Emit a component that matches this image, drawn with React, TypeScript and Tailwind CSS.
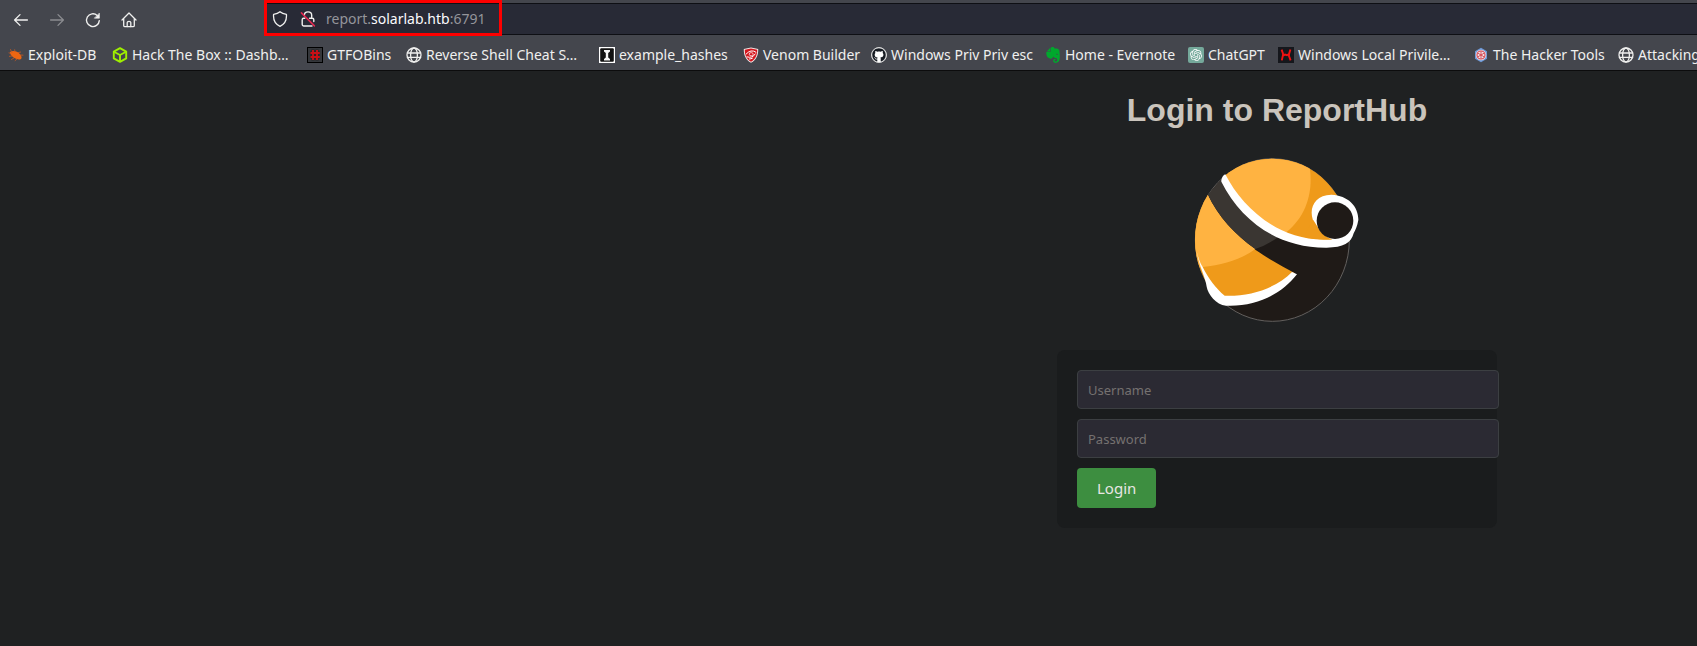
import React from "react";
import { SiHackthebox, SiEvernote, SiOpenai } from "react-icons/si";
import { FaGithub } from "react-icons/fa";

const line = {
  fill: "none",
  stroke: "currentColor",
  strokeLinecap: "round" as const,
  strokeLinejoin: "round" as const,
};

function BackIcon() {
  return (
    <svg viewBox="0 0 16 16" className="size-4" strokeWidth="1.3" {...line}>
      <path d="M14.4 8H1.8M7 2.6L1.6 8L7 13.4" />
    </svg>
  );
}

function ForwardIcon() {
  return (
    <svg viewBox="0 0 16 16" className="size-4" strokeWidth="1.3" {...line}>
      <path d="M1.6 8H14.2M9 2.6L14.4 8L9 13.4" />
    </svg>
  );
}

function ReloadIcon() {
  return (
    <svg viewBox="0 0 16 16" className="size-4" strokeWidth="1.4" {...line}>
      <path d="M14.3 8.6A6.4 6.4 0 1 1 12.2 3.4" />
      <path d="M14.4 1.4V6.2H9.6Z" fill="currentColor" strokeWidth="0.6" />
    </svg>
  );
}

function HomeIcon() {
  return (
    <svg viewBox="0 0 16 16" className="size-4" strokeWidth="1.3" {...line}>
      <path d="M1 8L8 1L15 8M2.7 6.6V13.4Q2.7 14.7 4 14.7H12Q13.3 14.7 13.3 13.4V6.6" />
      <path d="M6.2 14.5V10.6Q6.2 9.4 8 9.4Q9.8 9.4 9.8 10.6V14.5" />
    </svg>
  );
}

function ShieldIcon() {
  return (
    <svg viewBox="0 0 16 16" className="size-4" strokeWidth="1.3" {...line}>
      <path d="M8 0.8C9.6 2.2 12 3 14.4 3.3C14.9 8.6 13 13 8 15.3C3 13 1.1 8.6 1.6 3.3C4 3 6.4 2.2 8 0.8Z" />
    </svg>
  );
}

function InsecureLockIcon() {
  return (
    <svg viewBox="0 0 16 16" className="size-4" strokeWidth="1.4" {...line}>
      <path d="M4.3 4.6Q4.3 0.9 8 0.9Q11.7 0.9 11.7 4.3V7M9.6 7.3H12.4Q13.8 7.3 13.8 8.7V10.6M12 15H3.6Q2.2 15 2.2 13.6V8.7Q2.2 7.3 3.6 7.3H4.8" />
      <path d="M1.4 1.9L14.4 14.9" stroke="#e22850" strokeWidth="1.5" />
    </svg>
  );
}

function ExploitIcon() {
  return (
    <svg viewBox="0 0 16 16" className="size-4" fill="#ee6611">
      <path d="M2 5C5 3.2 9.5 4.2 12 7.2C14 9.4 14 11.4 12.6 12.2C9.5 13 5.4 11.4 3.4 8.6C2.6 7.4 1.8 6.2 2 5Z" />
      <path
        d="M4 6L2.4 2.2M7 5L6.6 2.4M10 5.6L13 5M12 8L15.4 8.2M4 9L1 9.4M6 11L3.2 12.6M9 12L6.8 13.8M3 6.4L0.6 5.8"
        stroke="#c95a22"
        strokeWidth="0.8"
      />
    </svg>
  );
}

function GtfoIcon() {
  return (
    <svg viewBox="0 0 16 16" className="size-4">
      <rect x="0.5" y="0.5" width="15" height="15" fill="#35373b" stroke="#000" />
      <path d="M6 2.6V13.4M10 2.6V13.4M3 6H13M3 10H13" stroke="#222325" strokeWidth="3" />
      <path d="M6 3V13M10 3V13M3.4 6H12.8M3.4 10H12.8" stroke="#c81015" strokeWidth="1.9" />
    </svg>
  );
}

function GlobeIcon() {
  return (
    <svg viewBox="0 0 16 16" className="size-4" strokeWidth="1.3" {...line}>
      <circle cx="8" cy="8" r="7" />
      <ellipse cx="8" cy="8" rx="3.4" ry="7" />
      <path d="M1.4 6H14.6M1.4 10.3H14.6" />
    </svg>
  );
}

function HashesIcon() {
  return (
    <svg viewBox="0 0 16 16" className="size-4">
      <rect width="16" height="16" fill="#fff" />
      <rect x="1.2" y="1.2" width="13.6" height="13.6" rx="1" fill="#111" />
      <path d="M5 3H11V4.4L9.2 6V10.4L11 12V13.4H5V12L6.8 10.4V6L5 4.4Z" fill="#f4f4f4" />
    </svg>
  );
}

function VenomIcon() {
  return (
    <svg viewBox="0 0 16 16" className="size-4">
      <path d="M8 0.4L15.2 2C15.4 8 13.4 13 8 15.8C2.6 13 0.6 8 0.8 2Z" fill="#f3e9e9" />
      <path d="M8 1.4L14.2 2.8C14.3 8 12.5 12.2 8 14.7C3.5 12.2 1.7 8 1.8 2.8Z" fill="#d3161d" />
      <path d="M2.8 7.4Q8 1.6 13.2 5.4M3.6 9.8Q9.6 11.6 12.4 6.6M6 12Q8 12 9.8 11" stroke="#fff" strokeWidth="1" fill="none" />
      <ellipse cx="8.2" cy="7.2" rx="2" ry="1.6" fill="#d3161d" stroke="#fff" strokeWidth="0.7" />
    </svg>
  );
}

function GithubIcon() {
  return (
    <span className="grid size-4 place-items-center rounded-full border border-[#d9d9d9] bg-white text-[#161b22]">
      <FaGithub className="size-[14px]" />
    </span>
  );
}

function ChatGptIcon() {
  return (
    <span className="grid size-4 place-items-center rounded-[2px] bg-[#75a99b] text-white">
      <SiOpenai className="size-3" />
    </span>
  );
}

function PrivilegeIcon() {
  return (
    <svg viewBox="0 0 16 16" className="size-4">
      <rect width="16" height="16" fill="#15171c" />
      <path d="M3.6 2.6L5 6.6V8L3.8 13.4M12.4 2.4L11 7.2V9L12.6 13.4M5 8.6L7 7.6L9 8.2L11 7" stroke="#f01212" strokeWidth="1.9" fill="none" />
    </svg>
  );
}

function HackerToolsIcon() {
  return (
    <svg viewBox="0 0 16 16" className="size-4">
      <path d="M8 0.8L14 4.3V11.7L8 15.2L2 11.7V4.3Z" fill="#6f9ad8" />
      <circle cx="8" cy="8" r="5.2" fill="#f2e4e6" />
      <circle cx="8" cy="8" r="4" fill="none" stroke="#d2414c" strokeWidth="1.1" />
      <path d="M8 4.4V11.6M4.9 6.2L11.1 9.8M4.9 9.8L11.1 6.2" stroke="#d2414c" strokeWidth="0.9" />
    </svg>
  );
}

function HackTheBoxIcon() {
  return (
    <svg viewBox="0 0 16 16" className="size-4" fill="none" stroke="#9fef00" strokeWidth="1.9" strokeLinejoin="round">
      <path d="M8 1.2L14.2 4.6V11.4L8 14.8L1.8 11.4V4.6Z" />
      <path d="M2.4 5L8 8L13.6 5M8 8V14.4" />
    </svg>
  );
}

const bookmarks = [
  { label: "Exploit-DB", icon: <ExploitIcon />, width: "w-[104px]" },
  { label: "Hack The Box :: Dashb…", icon: <HackTheBoxIcon />, width: "w-[195px]" },
  { label: "GTFOBins", icon: <GtfoIcon />, width: "w-[99px]" },
  { label: "Reverse Shell Cheat S…", icon: <GlobeIcon />, width: "w-[193px]" },
  { label: "example_hashes", icon: <HashesIcon />, width: "w-[144px]" },
  { label: "Venom Builder", icon: <VenomIcon />, width: "w-[128px]" },
  { label: "Windows Priv Priv esc", icon: <GithubIcon />, width: "w-[174px]" },
  { label: "Home - Evernote", icon: <SiEvernote className="size-4 text-[#00a82d]" />, width: "w-[143px]" },
  { label: "ChatGPT", icon: <ChatGptIcon />, width: "w-[90px]" },
  { label: "Windows Local Privile…", icon: <PrivilegeIcon />, width: "w-[195px]" },
  { label: "The Hacker Tools", icon: <HackerToolsIcon />, width: "w-[145px]" },
  { label: "Attacking", icon: <GlobeIcon />, width: "w-[80px]" },
];

function Toolbar() {
  return (
    <div className="flex h-[39px] items-start pt-[3px] pl-[13px]">
      <nav aria-label="Navigation" className="flex h-[34px] w-[253px] shrink-0 items-center gap-5">
        <button type="button" aria-label="Back"><BackIcon /></button>
        <button type="button" aria-label="Forward" disabled className="text-[#8b8c90]"><ForwardIcon /></button>
        <button type="button" aria-label="Reload"><ReloadIcon /></button>
        <button type="button" aria-label="Home"><HomeIcon /></button>
      </nav>
      <div className="relative flex h-8 grow items-center border-y border-l border-[#0e0f14] bg-[#282a36] pl-[5px]">
        <button type="button" aria-label="Tracking protection"><ShieldIcon /></button>
        <button type="button" aria-label="Connection is not secure" className="ml-3"><InsecureLockIcon /></button>
        <div role="textbox" aria-label="Address" className="ml-[10px] text-[14px] leading-5 text-[#94959b]">
          report.<span className="text-[#fbfbfe]">solarlab.htb</span>:6791
        </div>
        <div className="pointer-events-none absolute -top-1 -left-[3px] h-9 w-[238px] border-[3px] border-[#fe0000]" />
      </div>
    </div>
  );
}

function BookmarksBar() {
  return (
    <nav aria-label="Bookmarks" className="flex h-8 items-center overflow-hidden border-b border-[#0c0c0d] pl-2">
      {bookmarks.map((b) => (
        <a key={b.label} href="#" className={`flex shrink-0 items-center gap-1 whitespace-nowrap ${b.width}`}>
          <span className="shrink-0">{b.icon}</span>
          <span className="text-[14px] leading-5">{b.label}</span>
        </a>
      ))}
    </nav>
  );
}

function Logo() {
  return (
    <svg viewBox="-9 0 660 600" className="h-[200px] w-[220px]" role="img" aria-label="ReportHub">
      <defs>
        <clipPath id="ball">
          <ellipse cx="307" cy="300" rx="232" ry="244" />
        </clipPath>
      </defs>
      <ellipse cx="307" cy="300" rx="231" ry="244" fill="#1f1a17" stroke="#625f5d" strokeWidth="3" />
      <g clipPath="url(#ball)">
        <path d="M162 110C215 215 325 311 470 311L560 300V40H150Z" fill="#ef9a1a" />
        <path d="M162 110C205 205 275 262 340 283C402 240 432 165 419 80L400 40H150Z" fill="#ffb341" />
        <path d="M113 163C150 270 270 345 375 400C320 452 240 480 164 475L60 400V163Z" fill="#ef9a1a" />
        <path d="M113 163C145 230 195 285 256 327C215 358 160 374 98 381L60 390V163Z" fill="#ffb341" />
        <path d="M113 163L155 118C195 195 255 258 326 290Q294 314 256 327C195 285 145 230 113 163Z" fill="#3a3632" />
      </g>
      <path
        d="M154 120Q157 107 166 103C215 200 320 298 460 299H487A64 62 0 0 1 440 260C410 222 425 164 484 164C535 166 566 200 565 240C562 258 556 270 551 280C544 308 520 323 470 323C325 324 215 245 154 125Z"
        fill="#fff"
      />
      <path d="M430 240L445 264Q460 290 487 298L450 298Q425 297 400 290Z" fill="#ef9a1a" />
      <circle cx="495" cy="242" r="55" fill="#1f1a17" />
      <path
        d="M80 335C88 365 93 373 98 381C115 415 138 446 164 467C240 470 318 445 366 396L381 403C335 462 260 501 168 497C138 494 114 463 110 440C107 415 90 385 80 335Z"
        fill="#fff"
      />
    </svg>
  );
}

function LoginForm() {
  const field =
    "mb-[10px] box-content block h-[37px] w-full rounded-[4px] border border-[#3c3f42] bg-[#2b2a33] px-[10px] text-[13px] text-[#e8e6e3] placeholder:text-[#757170]";
  return (
    <form className="w-[440px] rounded-[8px] bg-[#1a1c1d] p-5" onSubmit={(e) => e.preventDefault()}>
      <input type="text" aria-label="Username" placeholder="Username" className={field} />
      <input type="password" aria-label="Password" placeholder="Password" className={field} />
      <button type="submit" className="block h-10 rounded-[4px] bg-[#3d8e40] px-5 text-[15px] text-[#e8e6e3]">
        Login
      </button>
    </form>
  );
}

export default function App() {
  return (
    <div className="flex min-h-screen flex-col overflow-hidden bg-[#1f2122] font-['Noto_Sans',sans-serif]">
      <header className="bg-[#44464d] text-[#f0f0ef]">
        <Toolbar />
        <BookmarksBar />
      </header>
      <main className="flex grow flex-col items-center pt-[21px] pl-[857px]">
        <h1 className="font-['Liberation_Sans',sans-serif] text-[32px] leading-[37px] font-bold text-[#cac4bc]">
          Login to ReportHub
        </h1>
        <div className="mt-[11px] mb-[10px]">
          <Logo />
        </div>
        <LoginForm />
      </main>
    </div>
  );
}
